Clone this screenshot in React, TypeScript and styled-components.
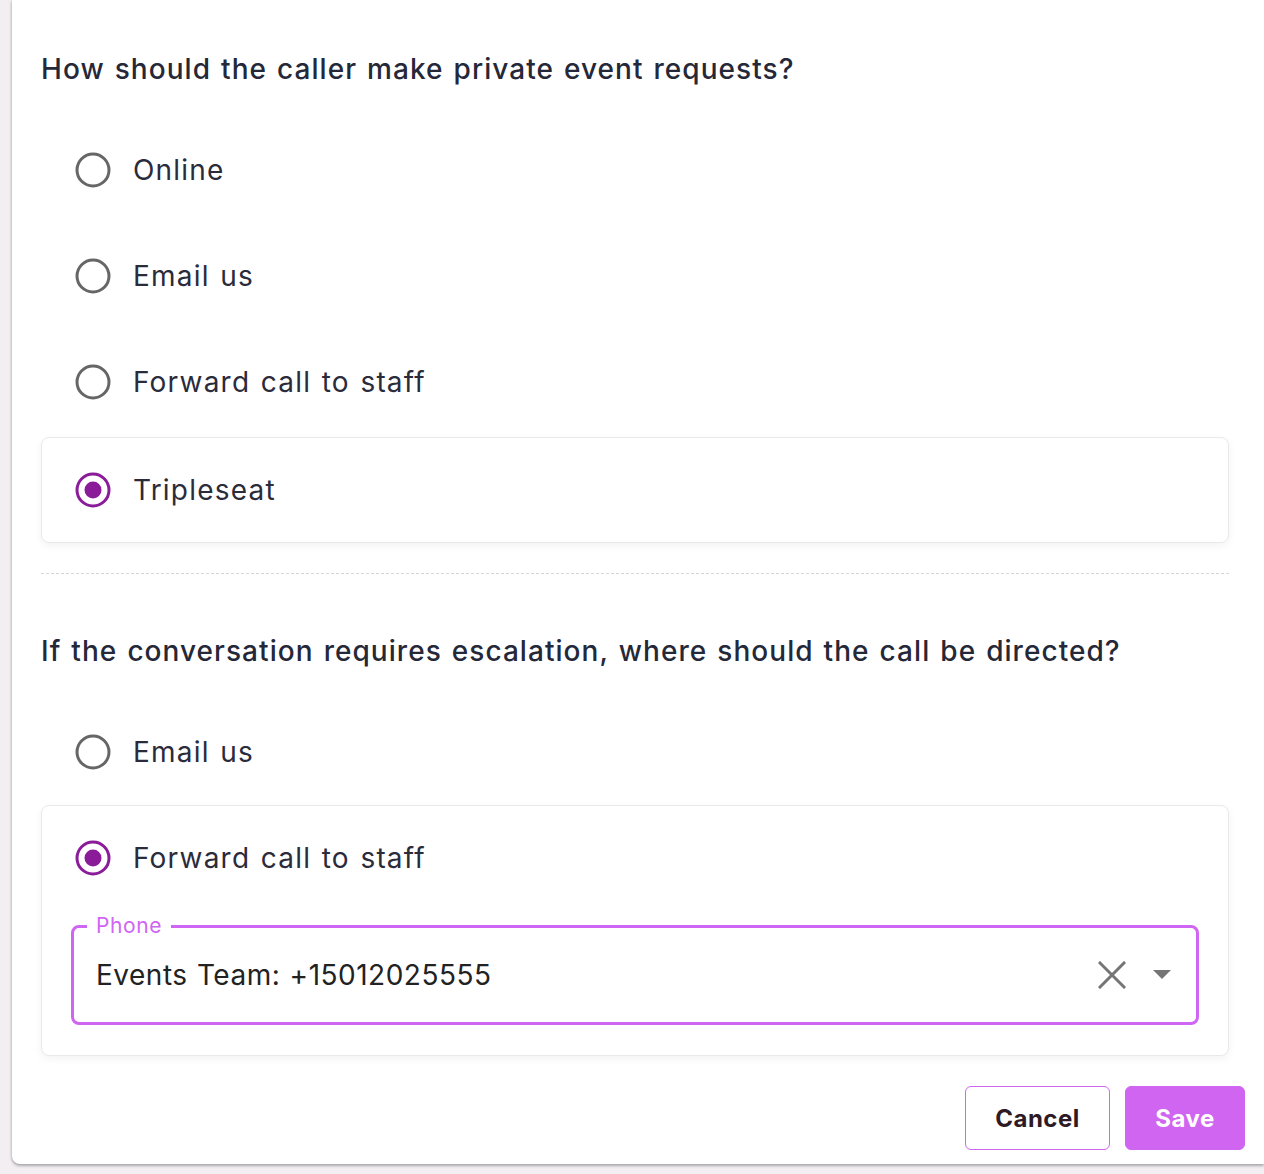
import React from "react";
import styled, { createGlobalStyle } from "styled-components";

const GlobalStyle = createGlobalStyle`
  html, body { margin: 0; padding: 0; }
  body {
    background: #f2eef1;
    font-family: Inter, "Noto Sans", "Liberation Sans", sans-serif;
    -webkit-font-smoothing: antialiased;
  }
  * { box-sizing: border-box; }
`;

const Page = styled.div`
  padding-left: 12px;
  min-height: 1174px;
`;

const Panel = styled.div`
  background: #ffffff;
  border-radius: 0 0 0 8px;
  box-shadow: 0 2px 3px rgba(0, 0, 0, 0.28), -1px 0 3px rgba(0, 0, 0, 0.08);
  padding: 49px 19px 14px 29px;
`;

const Content = styled.div`
  padding-right: 16px;
  display: flex;
  flex-direction: column;
`;

const Question = styled.h2`
  margin: 0 0 28px;
  font-size: 28px;
  line-height: 40px;
  font-weight: 500;
  color: #252838;
  letter-spacing: 1.05px;
  word-spacing: 1.5px;
`;

const OptionRow = styled.label`
  display: flex;
  align-items: center;
  gap: 20px;
  height: 106px;
  padding-left: 32px;
  font-size: 28px;
  color: #2a2b3b;
  letter-spacing: 1.2px;
  word-spacing: 1.5px;
  cursor: pointer;
`;

const Card = styled.div<{ $mt?: number }>`
  margin-top: ${(p) => p.$mt ?? 0}px;
  border: 1px solid #e9e9e9;
  border-radius: 8px;
  background: #fff;
  box-shadow: 0 3px 8px rgba(0, 0, 0, 0.05);
  display: flex;
  flex-direction: column;
`;

const CardOption = styled(OptionRow)`
  padding-left: 31px;
  height: 104px;
`;

const CardBody = styled.div`
  padding: 0 29px 30px;
`;

const Divider = styled.hr`
  margin: 30px 0 57px;
  border: none;
  border-top: 1px dashed #d6d6d6;
  height: 0;
`;

const Field = styled.fieldset`
  margin: 5px 0 0;
  border: 3px solid #cf66f3;
  border-radius: 8px;
  padding: 0 14px 0 22px;
  height: 110px;
  display: flex;
  align-items: center;
  gap: 10px;
`;

const Legend = styled.legend`
  padding: 0 9px;
  margin-left: -9px;
  font-size: 21px;
  line-height: 22px;
  color: #cf66f3;
  letter-spacing: 0.6px;
`;

const FieldValue = styled.div`
  flex: 1;
  font-size: 28px;
  color: #222;
  letter-spacing: 0.5px;
  word-spacing: 1px;
  margin-top: -9px;
`;

const IconButton = styled.span`
  display: inline-flex;
  align-items: center;
  justify-content: center;
  width: 40px;
  height: 40px;
  margin-top: -9px;
`;

const Actions = styled.div`
  display: flex;
  justify-content: flex-end;
  gap: 15px;
  margin-top: 30px;
`;

const Button = styled.button<{ $primary?: boolean }>`
  height: 64px;
  padding: 0 28px;
  border-radius: 6px;
  font-family: inherit;
  font-size: 24px;
  font-weight: 700;
  letter-spacing: 0.5px;
  cursor: pointer;
  border: 1.5px solid #d065f2;
  background: ${(p) => (p.$primary ? "#d065f2" : "#ffffff")};
  color: ${(p) => (p.$primary ? "#ffffff" : "#2d1a24")};
  min-width: ${(p) => (p.$primary ? "120px" : "145px")};
`;

const Radio = ({ checked }: { checked?: boolean }) => (
  <svg width="40" height="40" viewBox="0 0 40 40" aria-hidden>
    <circle
      cx="20"
      cy="20"
      r="16"
      fill="none"
      stroke={checked ? "#8b1c99" : "#666666"}
      strokeWidth="3"
    />
    {checked && <circle cx="20" cy="20" r="8.5" fill="#8b1c99" />}
  </svg>
);

export default function App() {
  return (
    <>
      <GlobalStyle />
      <Page>
        <Panel>
          <Content>
            <Question>How should the caller make private event requests?</Question>
            <OptionRow>
              <Radio />
              Online
            </OptionRow>
            <OptionRow>
              <Radio />
              Email us
            </OptionRow>
            <OptionRow>
              <Radio />
              Forward call to staff
            </OptionRow>
            <Card $mt={2}>
              <CardOption>
                <Radio checked />
                Tripleseat
              </CardOption>
            </Card>
            <Divider />
            <Question>
              If the conversation requires escalation, where should the call be directed?
            </Question>
            <OptionRow>
              <Radio />
              Email us
            </OptionRow>
            <Card>
              <CardOption>
                <Radio checked />
                Forward call to staff
              </CardOption>
              <CardBody>
                <Field>
                  <Legend>Phone</Legend>
                  <FieldValue>Events Team: +15012025555</FieldValue>
                  <IconButton>
                    <svg width="28" height="28" viewBox="0 0 28 28">
                      <path
                        d="M2 2 L26 26 M26 2 L2 26"
                        stroke="#757575"
                        strokeWidth="3"
                        strokeLinecap="square"
                      />
                    </svg>
                  </IconButton>
                  <IconButton>
                    <svg width="18" height="10" viewBox="0 0 18 10">
                      <path d="M0 0 L18 0 L9 9 Z" fill="#757575" />
                    </svg>
                  </IconButton>
                </Field>
              </CardBody>
            </Card>
          </Content>
          <Actions>
            <Button>Cancel</Button>
            <Button $primary>Save</Button>
          </Actions>
        </Panel>
      </Page>
    </>
  );
}
